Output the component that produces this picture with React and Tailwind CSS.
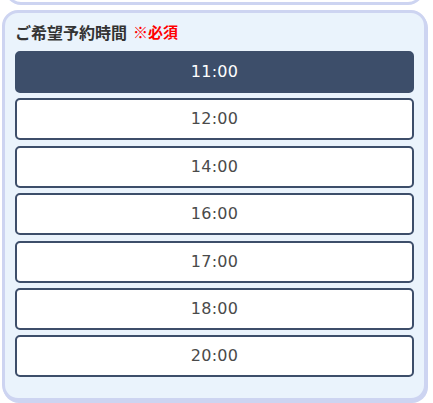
import React from "react";

const times = ["11:00", "12:00", "14:00", "16:00", "17:00", "18:00", "20:00"];

export default function App() {
  return (
    <div className="w-[433px] h-[403px] overflow-hidden bg-white pl-[2px]" style={{ fontFamily: '"DejaVu Sans", "Noto Sans CJK JP", sans-serif' }}>
      <div className="w-[425px] h-[5px] overflow-hidden">
        <div className="h-[30px] -mt-[25px] mx-[3px] rounded-b-[16px] border-[3px] border-[#cdd4f1] bg-white" />
      </div>
      <div className="w-[425px] mt-[5px] rounded-[16px] border-[3px] border-[#cdd4f1] bg-[#eaf3fc] shadow-[1px_2px_0_#cdd4f1] px-[10px] pt-[9px] pb-[21px]">
        <div className="h-[20px] flex items-center gap-[6px] mb-[9px] leading-[20px]" style={{ fontFamily: '"Noto Sans CJK JP", sans-serif' }}>
          <span className="text-[16px] font-bold text-[#333]">ご希望予約時間</span>
          <span className="text-[15px] font-bold text-[#ff0000]">※必須</span>
        </div>
        <div className="flex flex-col gap-[5.4px]">
          {times.map((t, i) => (
            <div
              key={t}
              className={
                "h-[42px] flex items-center justify-center rounded-[5px] border-2 border-[#3d4e6a] text-[16px] tracking-[0.3px] " +
                (i === 0 ? "bg-[#3d4e6a] text-white" : "bg-white text-[#4a4a4a]")
              }
            >
              {t}
            </div>
          ))}
        </div>
      </div>
    </div>
  );
}
